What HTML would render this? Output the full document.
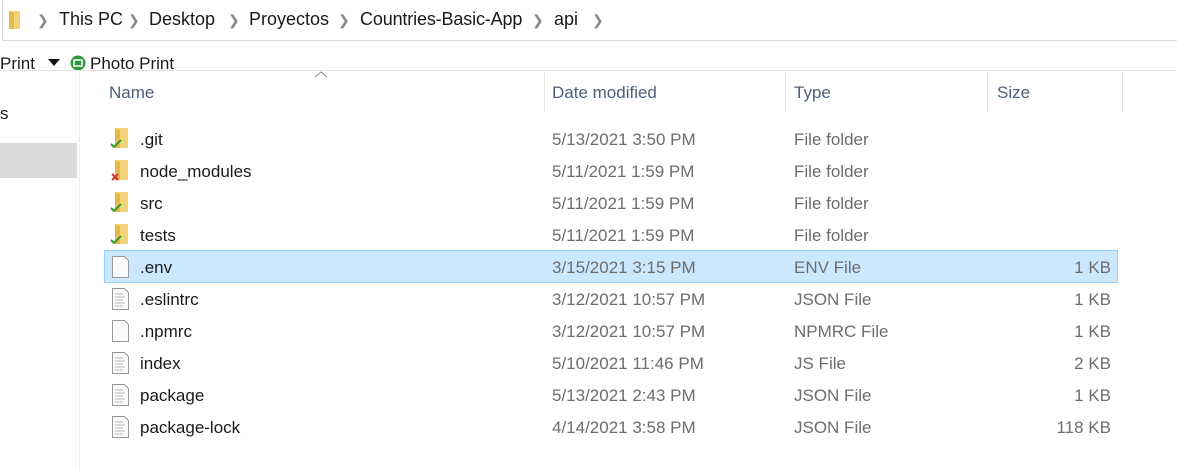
<!DOCTYPE html>
<html><head><style>
body{margin:0;width:1177px;height:467px;background:#fff;font-family:"Liberation Sans",sans-serif;position:relative;overflow:hidden;color:#1a1a1a}
.a{position:absolute}
.addr{left:2px;top:-1px;width:1180px;height:42px;border:1px solid #d9d9d9;box-sizing:border-box}
.bc{font-size:18px;top:9px;color:#1a1a1a}
.ch{font-size:14px;color:#888;top:12px}
.hd{font-size:17px;color:#4c607a;top:83px}
.sep{top:72px;width:1px;height:40px;background:#e5e5e5}
.row{font-size:17px;height:32px;line-height:32px}
.t{color:#6d6d6d}
</style></head><body>
<div class="a addr"></div>
<svg class="a" style="left:8px;top:8px" width="14" height="22"><path d="M1 3h11v18H3z" fill="#f3d27a"/><path d="M1 3l5 2v16H1z" fill="#e6b94a"/></svg>
<span class="a ch" style="left:37px">&#10095;</span><span class="a bc" style="left:59px">This PC</span>
<span class="a ch" style="left:128px">&#10095;</span><span class="a bc" style="left:149px">Desktop</span>
<span class="a ch" style="left:228px">&#10095;</span><span class="a bc" style="left:249px">Proyectos</span>
<span class="a ch" style="left:338px">&#10095;</span><span class="a bc" style="left:360px;letter-spacing:-0.15px">Countries-Basic-App</span>
<span class="a ch" style="left:532px">&#10095;</span><span class="a bc" style="left:554px">api</span>
<span class="a ch" style="left:592px">&#10095;</span>
<div class="a" style="left:0;top:54px;font-size:17px">Print</div>
<svg class="a" style="left:48px;top:59px" width="12" height="8"><path d="M0 0h12L6 7z" fill="#111"/></svg>
<svg class="a" style="left:70px;top:55px" width="16" height="16"><circle cx="8" cy="8" r="7.5" fill="#2f9a3a"/><rect x="4" y="5" width="8" height="6" fill="none" stroke="#fff" stroke-width="1.5"/></svg>
<div class="a" style="left:90px;top:54px;font-size:17px">Photo Print</div>
<div class="a" style="left:0;top:70px;width:1177px;height:1px;background:#e5e5e5"></div>
<div class="a" style="left:79px;top:70px;width:1px;height:400px;background:#eee"></div>
<div class="a" style="left:0;top:104px;font-size:17px">s</div>
<div class="a" style="left:0;top:143px;width:77px;height:35px;background:#d9d9d9"></div>
<svg class="a" style="left:314px;top:70px" width="14" height="8"><path d="M1 7l6-5 6 5" fill="none" stroke="#888" stroke-width="1"/></svg>
<span class="a hd" style="left:109px">Name</span>
<span class="a hd" style="left:552px">Date modified</span>
<span class="a hd" style="left:794px">Type</span>
<span class="a hd" style="left:997px">Size</span>
<div class="a sep" style="left:544px"></div><div class="a sep" style="left:785px"></div><div class="a sep" style="left:987px"></div><div class="a sep" style="left:1122px"></div>
<div class="a" style="left:104px;top:250px;width:1012px;height:31px;background:#cce8ff;border:1px solid #99d1ff"></div>
<div id="rows"></div>
<script>
var d=[[".git","5/13/2021 3:50 PM","File folder","","ok"],["node_modules","5/11/2021 1:59 PM","File folder","","x"],["src","5/11/2021 1:59 PM","File folder","","ok"],["tests","5/11/2021 1:59 PM","File folder","","ok"],[".env","3/15/2021 3:15 PM","ENV File","1 KB","b"],[".eslintrc","3/12/2021 10:57 PM","JSON File","1 KB","l"],[".npmrc","3/12/2021 10:57 PM","NPMRC File","1 KB","b"],["index","5/10/2021 11:46 PM","JS File","2 KB","l"],["package","5/13/2021 2:43 PM","JSON File","1 KB","l"],["package-lock","4/14/2021 3:58 PM","JSON File","118 KB","l"]];
var h="";d.forEach(function(r,i){var y=124+i*32,ic="";
if(r[4]=="ok"||r[4]=="x"){ic='<svg class="a" style="left:110px;top:'+(y+3)+'px" width="20" height="24"><path d="M5 1h13v20H7z" fill="#f3d27a"/><path d="M5 1l5 2v18H5z" fill="#e6b94a"/>'+(r[4]=="ok"?'<path d="M1 17l3 3 7-7" fill="none" stroke="#3a9a2a" stroke-width="2"/>':'<path d="M2 15l6 6M8 15l-6 6" stroke="#d33" stroke-width="2"/>')+'</svg>';}
else{ic='<svg class="a" style="left:112px;top:'+(y+4)+'px" width="18" height="22"><path d="M0.5 0.5h12l4 4v17H0.5z" fill="#fafafa" stroke="#999"/>'+(r[4]=="l"?'<path d="M3 6h8M3 9h10M3 12h8M3 15h10M3 18h8" stroke="#bbb"/>':'')+'</svg>';}
h+=ic+'<div class="a row" style="left:140px;top:'+y+'px">'+r[0]+'</div><div class="a row t" style="left:552px;top:'+y+'px">'+r[1]+'</div><div class="a row t" style="left:794px;top:'+y+'px">'+r[2]+'</div><div class="a row t" style="left:990px;width:121px;text-align:right;top:'+y+'px">'+r[3]+'</div>';});
document.getElementById("rows").innerHTML=h;
</script>
</body></html>
